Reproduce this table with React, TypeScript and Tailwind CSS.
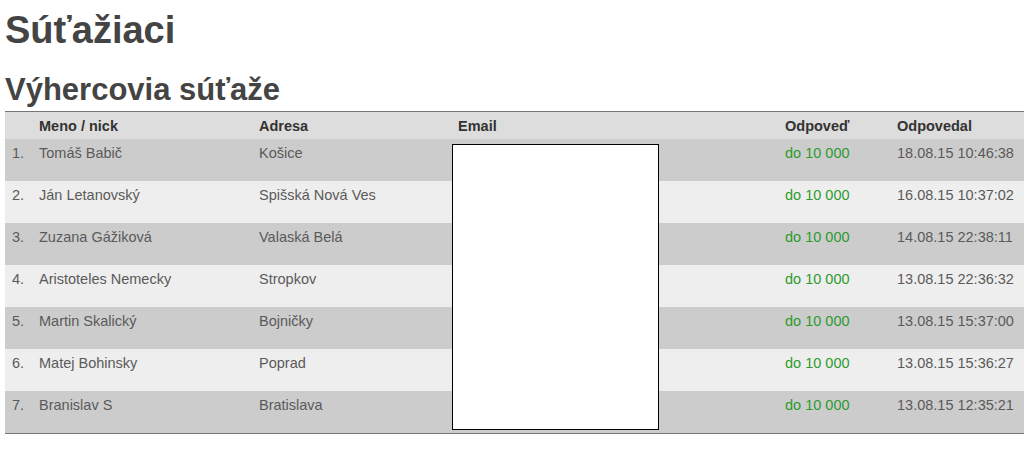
const rows = [
  { name: 'Tomáš Babič', city: 'Košice', answer: 'do 10 000', time: '18.08.15 10:46:38' },
  { name: 'Ján Letanovský', city: 'Spišská Nová Ves', answer: 'do 10 000', time: '16.08.15 10:37:02' },
  { name: 'Zuzana Gážiková', city: 'Valaská Belá', answer: 'do 10 000', time: '14.08.15 22:38:11' },
  { name: 'Aristoteles Nemecky', city: 'Stropkov', answer: 'do 10 000', time: '13.08.15 22:36:32' },
  { name: 'Martin Skalický', city: 'Bojničky', answer: 'do 10 000', time: '13.08.15 15:37:00' },
  { name: 'Matej Bohinsky', city: 'Poprad', answer: 'do 10 000', time: '13.08.15 15:36:27' },
  { name: 'Branislav S', city: 'Bratislava', answer: 'do 10 000', time: '13.08.15 12:35:21' },
]

const cols = 'grid grid-cols-[34px_220px_199px_327px_112px_1fr]'

export default function App() {
  return (
    <div className="min-h-[449px] bg-white px-[5px] text-[#5a5a5a] font-['Liberation_Sans',Arial,sans-serif]">
      <h1 className="pt-[9px] text-[38px] leading-[42px] font-bold text-[#444]">Súťažiaci</h1>
      <h2 className="mt-[21px] text-[31px] leading-[35px] font-bold text-[#444]">Výhercovia súťaže</h2>

      <div className="relative mt-[4px] w-[1019px] border-t border-b border-[#777] text-[14.5px] leading-[20px]">
        <div className={`${cols} h-[27px] items-center bg-[#dddddd] font-bold text-[#333]`}>
          <div />
          <div>Meno / nick</div>
          <div>Adresa</div>
          <div>Email</div>
          <div>Odpoveď</div>
          <div>Odpovedal</div>
        </div>

        {rows.map((r, i) => (
          <div
            key={i}
            className={`${cols} h-[42px] pt-[4px] ${i % 2 === 0 ? 'bg-[#cccccc]' : 'bg-[#eeeeee]'}`}
          >
            <div className="pl-[7px]">{i + 1}.</div>
            <div>{r.name}</div>
            <div>{r.city}</div>
            <div />
            <div className="text-[#2e9a2e]">{r.answer}</div>
            <div>{r.time}</div>
          </div>
        ))}

        {/* redacted emails */}
        <div className="absolute left-[447px] top-[32px] h-[286px] w-[207px] border border-black bg-white" />
      </div>
    </div>
  )
}
